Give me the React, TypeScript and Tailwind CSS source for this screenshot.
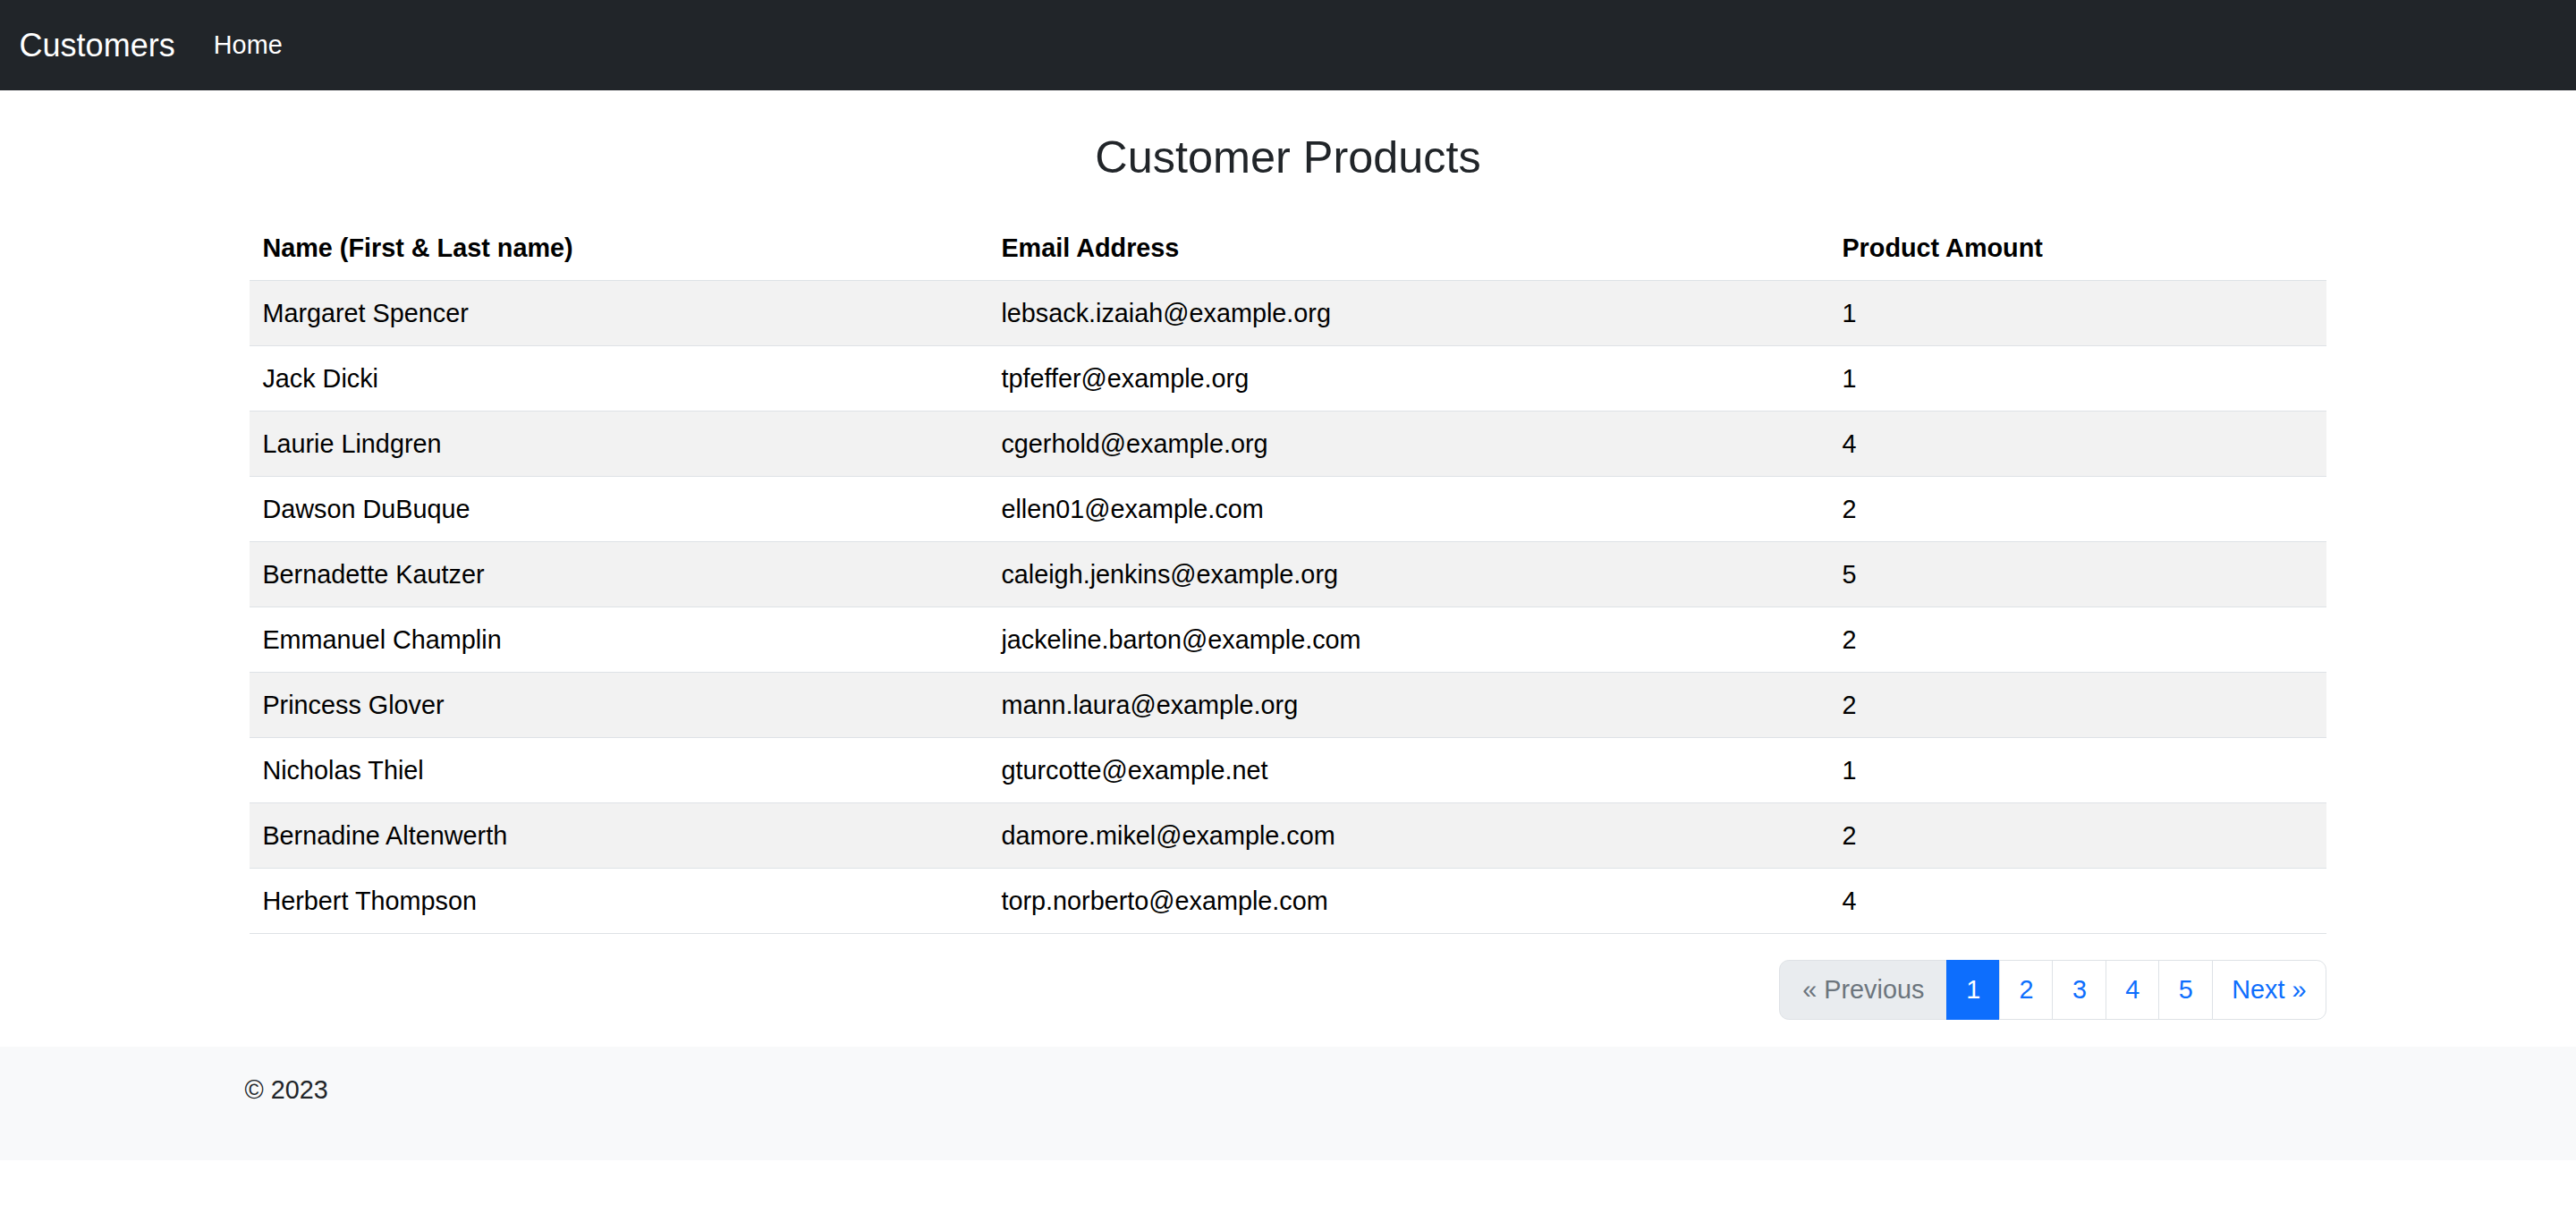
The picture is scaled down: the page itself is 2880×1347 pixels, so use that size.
const customers = [
  { name: "Margaret Spencer", email: "lebsack.izaiah@example.org", amount: 1 },
  { name: "Jack Dicki", email: "tpfeffer@example.org", amount: 1 },
  { name: "Laurie Lindgren", email: "cgerhold@example.org", amount: 4 },
  { name: "Dawson DuBuque", email: "ellen01@example.com", amount: 2 },
  { name: "Bernadette Kautzer", email: "caleigh.jenkins@example.org", amount: 5 },
  { name: "Emmanuel Champlin", email: "jackeline.barton@example.com", amount: 2 },
  { name: "Princess Glover", email: "mann.laura@example.org", amount: 2 },
  { name: "Nicholas Thiel", email: "gturcotte@example.net", amount: 1 },
  { name: "Bernadine Altenwerth", email: "damore.mikel@example.com", amount: 2 },
  { name: "Herbert Thompson", email: "torp.norberto@example.com", amount: 4 },
];

const pages = ["1", "2", "3", "4", "5"];

export default function App() {
  return (
    <div className="min-h-screen bg-white font-['Liberation_Sans',Arial,sans-serif] text-[#212529]">
      <nav className="flex h-[101px] items-center bg-[#212529] px-[21.6px]">
        <a href="#" className="mr-[28.8px] text-[36px] leading-[54px] text-white">
          Customers
        </a>
        <a href="#" className="px-[14.4px] text-[28.8px] leading-[43.2px] text-white">
          Home
        </a>
      </nav>

      <main className="mx-auto w-[2322px]">
        <h3 className="mt-[45px] mb-[35px] text-center text-[50.4px] font-medium leading-[60.5px] text-[#212529]">
          Customer Products
        </h3>

        <table className="w-full border-collapse text-left text-[28.8px] leading-[43.2px] text-black">
          <thead>
            <tr className="border-b border-[#dee2e6]">
              <th className="w-[826px] px-[14.4px] py-[14.4px] font-bold">Name (First &amp; Last name)</th>
              <th className="w-[940px] px-[14.4px] py-[14.4px] font-bold">Email Address</th>
              <th className="px-[14.4px] py-[14.4px] font-bold">Product Amount</th>
            </tr>
          </thead>
          <tbody>
            {customers.map((c, i) => (
              <tr
                key={c.email}
                className={i % 2 === 0 ? "border-b border-[#dee2e6] bg-[#f2f2f2]" : "border-b border-[#dee2e6] bg-white"}
              >
                <td className="px-[14.4px] py-[14.4px]">{c.name}</td>
                <td className="px-[14.4px] py-[14.4px]">{c.email}</td>
                <td className="px-[14.4px] py-[14.4px]">{c.amount}</td>
              </tr>
            ))}
          </tbody>
        </table>

        <div className="mt-[29px] mb-[30px] flex justify-end">
          <ul className="flex text-[28.8px] leading-[43.2px]">
            <li>
              <span className="block rounded-l-[10.8px] border-[1.8px] border-[#dee2e6] bg-[#e9ecef] px-[25px] py-[10.8px] text-[#6c757d]">
                « Previous
              </span>
            </li>
            {pages.map((p) => (
              <li key={p} className="-ml-[1.8px]">
                <a
                  href="#"
                  className={
                    p === "1"
                      ? "block border-[1.8px] border-[#0d6efd] bg-[#0d6efd] px-[21.6px] py-[10.8px] text-white"
                      : "block border-[1.8px] border-[#dee2e6] bg-white px-[21.6px] py-[10.8px] text-[#0d6efd]"
                  }
                >
                  {p}
                </a>
              </li>
            ))}
            <li className="-ml-[1.8px]">
              <a
                href="#"
                className="block rounded-r-[10.8px] border-[1.8px] border-[#dee2e6] bg-white px-[21.6px] py-[10.8px] text-[#0d6efd]"
              >
                Next »
              </a>
            </li>
          </ul>
        </div>
      </main>

      <footer className="h-[127px] bg-[#f8f9fa]">
        <div className="mx-auto w-[2376px] px-[21.6px] pt-[27px]">
          <p className="text-[28.8px] leading-[43.2px] text-[#212529]">© 2023</p>
        </div>
      </footer>
    </div>
  );
}
